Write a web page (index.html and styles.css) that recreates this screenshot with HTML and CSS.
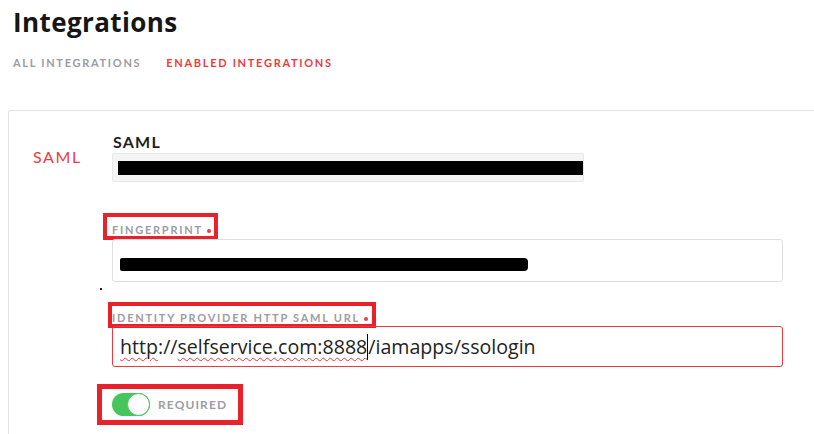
FILE: index.html
```html
<!DOCTYPE html>
<html lang="en">
<head>
<meta charset="utf-8">
<title>Integrations</title>
<link rel="stylesheet" href="styles.css">
</head>
<body>
<header class="page-head">
  <h1 class="title">Integrations</h1>
  <nav class="tabs">
    <a class="tab">ALL INTEGRATIONS</a>
    <a class="tab tab--active">ENABLED INTEGRATIONS</a>
  </nav>
</header>
<section class="card">
  <div class="card-name">SAML</div>
  <div class="card-body">
    <h2 class="provider">SAML</h2>
    <div class="readonly"><span class="redact redact--id"></span></div>

    <div class="field">
      <label class="label hl hl--fp">FINGERPRINT <span class="req"></span></label>
      <div class="input input--fp"><span class="redact redact--fp"></span></div>
    </div>

    <span class="speck"></span>

    <div class="field">
      <label class="label hl hl--url">IDENTITY PROVIDER HTTP SAML URL <span class="req"></span></label>
      <div class="input input--error"><span class="url"><span class="spell">http</span>://<span class="spell">selfservice.com:8888</span><span class="caret"></span>/iamapps/ssologin</span></div>
    </div>

    <div class="switch-row hl hl--sw">
      <span class="switch"><span class="knob"></span></span>
      <span class="switch-label">REQUIRED</span>
    </div>
  </div>
</section>
</body>
</html>
```
FILE: styles.css
```css
html, body {
  overflow: hidden;
}
body {
  margin: 0;
  height: 434px;
  background: #fff;
  font-family: "Lato", "Open Sans", sans-serif;
  color: #1b1b1b;
}

.page-head {
  padding-left: 13px;
}
.title {
  margin: 9px 0 0;
  font-family: "Open Sans", "Lato", sans-serif;
  font-size: 26px;
  line-height: 26px;
  font-weight: 700;
  letter-spacing: 0.4px;
  color: #161616;
}
.tabs {
  display: flex;
  gap: 25px;
  margin-top: 20px;
  line-height: 16px;
}
.tab {
  font-size: 11px;
  font-weight: 700;
  letter-spacing: 1.7px;
  color: #9b9ba1;
}
.tab--active {
  color: #ef3a3d;
}

.card {
  display: flex;
  margin: 39px -40px 0 8px;
  border: 1px solid #e2e2e2;
  border-radius: 2px;
  padding-top: 22px;
  height: 400px;
}
.card-name {
  box-sizing: border-box;
  width: 103px;
  padding: 15px 0 0 24px;
  font-size: 16px;
  line-height: 18px;
  letter-spacing: 1.6px;
  color: #ee3b3f;
}
.card-body {
  display: flex;
  flex-direction: column;
  align-items: flex-start;
}
.provider {
  margin: 0 0 0 1px;
  font-size: 16px;
  line-height: 18px;
  font-weight: 700;
  letter-spacing: 1.2px;
  color: #1e1e1e;
}
.readonly {
  box-sizing: border-box;
  display: flex;
  width: 472px;
  height: 29px;
  margin-top: 2px;
  padding: 7px 0 0 5px;
  background: #f4f4f4;
  border: 1px solid #e8e8e8;
  border-radius: 2px;
}
.redact {
  display: block;
  background: #000;
}
.redact--id {
  width: 465px;
  height: 14px;
}
.redact--fp {
  width: 408px;
  height: 13px;
  border-radius: 2px 4px 4px 2px;
}

.field {
  display: flex;
  flex-direction: column;
  align-items: flex-start;
}
.label {
  display: inline-flex;
  align-items: center;
  gap: 4px;
  font-size: 11px;
  line-height: 12px;
  font-weight: 700;
  letter-spacing: 1.75px;
  color: #9c9ca2;
}
.req {
  width: 4px;
  height: 4px;
  border-radius: 50%;
  background: #ee3b3f;
  margin-top: 1px;
}
.hl {
  outline: 4px solid #e9212b;
}
.hl--fp {
  margin: 35px 0 0 -5px;
  padding: 7px 3px 0 5px;
}
.hl--url {
  margin: 16px 0 0 0;
  padding: 6px 4px 0 0;
}
.input {
  box-sizing: border-box;
  display: flex;
  width: 671px;
  border: 1px solid #dedede;
  border-radius: 3px;
}
.input--fp {
  height: 43px;
  margin-top: 3px;
  padding: 18px 0 0 7px;
}
.input--error {
  height: 41px;
  margin-top: 2px;
  align-items: center;
  padding-left: 7px;
  border-color: #eb3b3e;
}
.url {
  font-family: "Open Sans", "Lato", sans-serif;
  font-size: 19.6px;
  color: #222;
  display: inline-flex;
  align-items: center;
}
.spell {
  text-decoration: underline wavy #e8343a;
  text-decoration-thickness: 1px;
  text-underline-offset: 3px;
}
.caret {
  display: inline-block;
  width: 1px;
  height: 26px;
  background: #000;
}
.speck {
  display: block;
  width: 2px;
  height: 2px;
  margin: 6px 0 0 -12px;
  background: #222;
}

.switch-row {
  display: inline-flex;
  align-items: center;
  gap: 8px;
  margin: 22px 0 0 -10px;
  padding: 0 11px 0 10px;
  height: 31px;
  outline-width: 5px;
}
.switch {
  display: flex;
  justify-content: flex-end;
  width: 38px;
  height: 23px;
  border-radius: 12px;
  background: #45c55a;
}
.knob {
  box-sizing: border-box;
  width: 23px;
  height: 23px;
  border-radius: 50%;
  background: #fff;
  border: 1.5px solid #45c55a;
}
.switch-label {
  font-size: 12px;
  font-weight: 700;
  letter-spacing: 1.1px;
  color: #9c9ca2;
}
```
